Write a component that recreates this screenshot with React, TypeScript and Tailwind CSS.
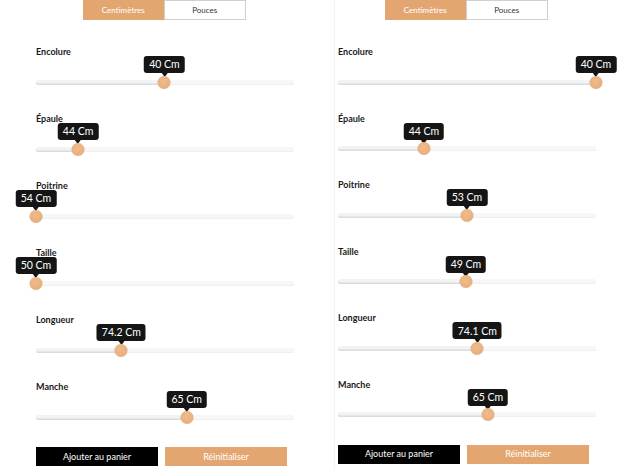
type Row = { label: string; value: string; pct: number }

const leftRows: Row[] = [
  { label: 'Encolure', value: '40 Cm', pct: 49.8 },
  { label: 'Épaule', value: '44 Cm', pct: 16.3 },
  { label: 'Poitrine', value: '54 Cm', pct: 0 },
  { label: 'Taille', value: '50 Cm', pct: 0 },
  { label: 'Longueur', value: '74.2 Cm', pct: 33.1 },
  { label: 'Manche', value: '65 Cm', pct: 58.4 },
]

const rightRows: Row[] = [
  { label: 'Encolure', value: '40 Cm', pct: 100 },
  { label: 'Épaule', value: '44 Cm', pct: 33.3 },
  { label: 'Poitrine', value: '53 Cm', pct: 50 },
  { label: 'Taille', value: '49 Cm', pct: 49.6 },
  { label: 'Longueur', value: '74.1 Cm', pct: 54 },
  { label: 'Manche', value: '65 Cm', pct: 58.1 },
]

function Slider({ row }: { row: Row }) {
  return (
    <div className="relative h-[5px] rounded-full bg-[#f7f7f7] shadow-[inset_0_-1px_0_#efefef]">
      <div
        className="absolute left-0 top-0 h-[5px] rounded-full bg-[#f3f3f3] shadow-[inset_0_-1.5px_0_#dcdcdc]"
        style={{ width: `${row.pct}%` }}
      />
      <div className="absolute top-0" style={{ left: `${row.pct}%` }}>
        <div className="absolute bottom-[2.5px] left-0 -translate-x-1/2">
          <div className="flex h-[17px] items-center whitespace-nowrap rounded-[3px] bg-[#151515] px-[5px] text-[10.5px] leading-none text-white">
            {row.value}
          </div>
          <div className="mx-auto h-0 w-0 border-x-[3px] border-t-[4px] border-x-transparent border-t-[#151515]" />
        </div>
        <div className="absolute left-0 top-[-4px] h-[13px] w-[13px] -translate-x-1/2 rounded-full bg-[radial-gradient(circle_at_45%_40%,#efbc8e,#e6a873)] shadow-[0_0_1px_rgba(0,0,0,0.15)]" />
      </div>
    </div>
  )
}

function Panel({ rows, rowH }: { rows: Row[]; rowH: string }) {
  return (
    <div className="w-[258px]">
      <div className="ml-[47px] flex h-[20px] w-[163px] text-[8px]">
        <div className="flex flex-1 items-center justify-center bg-[#e4a671] text-white">Centimètres</div>
        <div className="flex flex-1 items-center justify-center border border-[#cfcfcf] bg-white text-[#333]">
          Pouces
        </div>
      </div>
      <div className="mt-[26px]">
        {rows.map((row) => (
          <div key={row.label} className={rowH}>
            <div className="text-[9px] font-bold leading-[12px] text-[#1a1a1a]">{row.label}</div>
            <div className="pt-[21.5px]">
              <Slider row={row} />
            </div>
          </div>
        ))}
      </div>
      <div className="-mt-[1px] flex h-[19px] w-[251px] gap-[7px] text-[9px] text-white">
        <div className="flex flex-1 items-center justify-center bg-black">Ajouter au panier</div>
        <div className="flex flex-1 items-center justify-center bg-[#e4a671]">Réinitialiser</div>
      </div>
    </div>
  )
}

export default function App() {
  return (
    <div className="flex h-[470px] w-[636px] overflow-hidden bg-white font-['Lato',sans-serif]">
      <div className="w-[318px] pl-[36px]">
        <Panel rows={leftRows} rowH="h-[67px]" />
      </div>
      <div className="ml-[16px] w-[302px] border-l border-[#f3f3f3] pl-[3px]">
        <Panel rows={rightRows} rowH="h-[66.6px]" />
      </div>
    </div>
  )
}
